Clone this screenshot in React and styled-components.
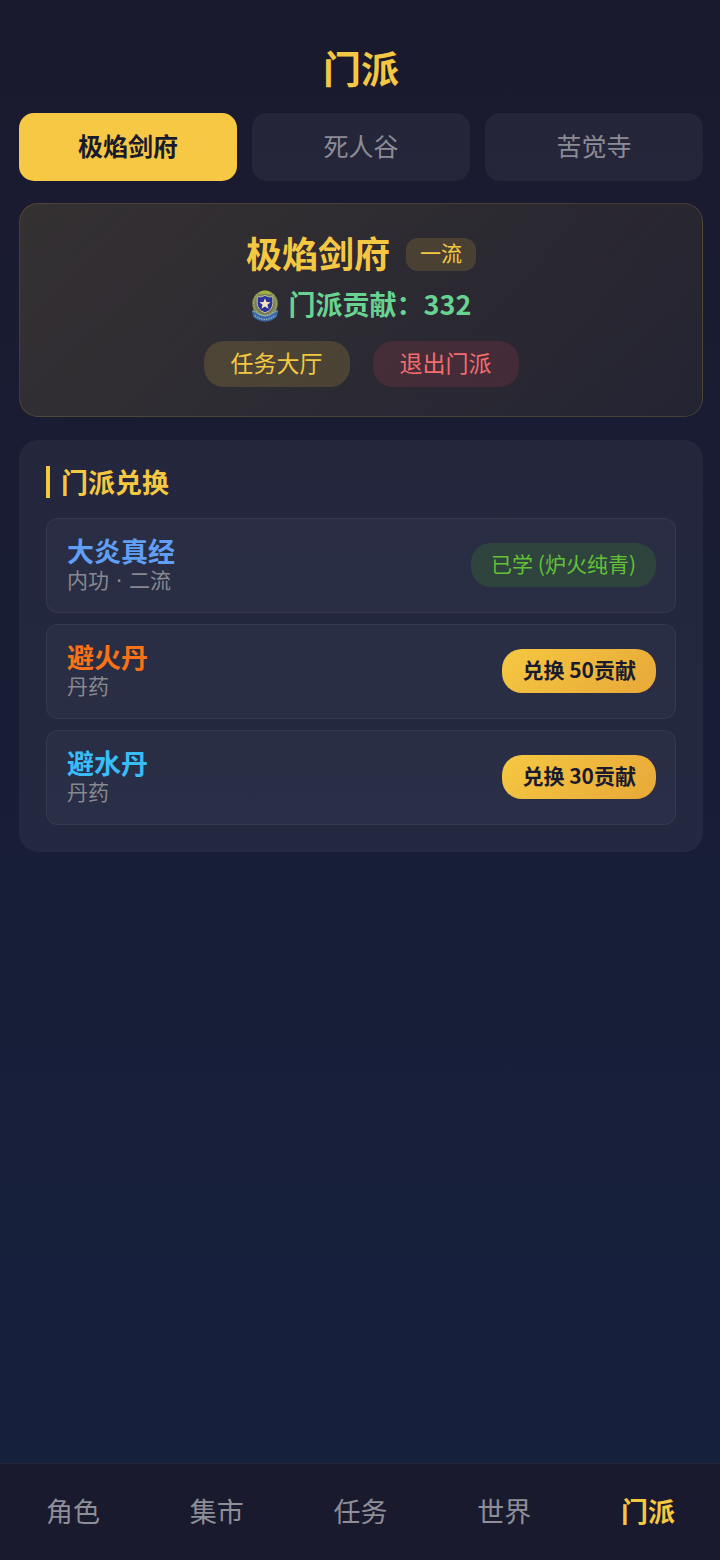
import React, { useState } from "react";
import styled, { createGlobalStyle, css } from "styled-components";

const GlobalStyle = createGlobalStyle`
  *, *::before, *::after { box-sizing: border-box; }
  body {
    margin: 0;
    background: #1a1a2e;
    color: #ffffff;
    font-family: "Noto Sans CJK SC", "Noto Sans", sans-serif;
  }
  button { font-family: inherit; border: 0; margin: 0; cursor: pointer; }
  h1, h2, h3, p, ul { margin: 0; padding: 0; }
`;

const Page = styled.div`
  display: flex;
  flex-direction: column;
  min-height: 100vh;
  background: linear-gradient(180deg, #1a1a2e 0%, #16213e 100%);
`;

const Main = styled.main`
  flex: 1;
  display: flex;
  flex-direction: column;
  padding: 39px 17px 24px 19px;
`;

const PageTitle = styled.h1`
  margin-bottom: 18px;
  text-align: center;
  font-size: 38px;
  line-height: 56px;
  font-weight: 700;
  color: #f5c842;
`;

const SectTabs = styled.div`
  display: flex;
  gap: 15px;
  margin-bottom: 22px;
`;

const SectTab = styled.button`
  flex: 1;
  height: 68px;
  padding: 0 0 4px;
  border-radius: 15px;
  font-size: 25px;
  line-height: 36px;
  background: rgba(255, 255, 255, 0.05);
  color: #8c8c96;
  ${({ $active }) =>
    $active &&
    css`
      background: #f7c843;
      color: #1a1a2e;
      font-weight: 700;
    `}
`;

const SectCard = styled.section`
  display: flex;
  flex-direction: column;
  align-items: center;
  margin-bottom: 23px;
  padding: 24px 24px 29px;
  border: 1px solid rgba(245, 200, 66, 0.15);
  border-radius: 19px;
  background: linear-gradient(135deg, rgba(245, 200, 66, 0.13), rgba(245, 200, 66, 0.05));
`;

const NameRow = styled.div`
  display: flex;
  align-items: center;
  gap: 16px;
`;

const SectName = styled.h2`
  padding-bottom: 4px;
  font-size: 36px;
  line-height: 48px;
  font-weight: 700;
  color: #f5c842;
`;

const RankBadge = styled.span`
  padding: 0 14px 4px;
  border-radius: 12px;
  background: rgba(245, 200, 66, 0.15);
  color: #f5c842;
  font-size: 21px;
  line-height: 29px;
`;

const Contribution = styled.p`
  display: flex;
  align-items: center;
  gap: 10px;
  margin: 4px 0 13px;
  color: #68d391;
  font-size: 27px;
  line-height: 40px;
  font-weight: 700;
`;

const ContributionText = styled.span`
  padding-bottom: 4px;
`;

const Actions = styled.div`
  display: flex;
  gap: 23px;
`;

const ActionButton = styled.button`
  height: 46px;
  padding: 0 27px 4px;
  border-radius: 20px;
  font-size: 23px;
  line-height: 34px;
  color: ${({ $danger }) => ($danger ? "#f56c6f" : "#f5c842")};
  background: ${({ $danger }) =>
    $danger ? "rgba(245, 80, 90, 0.13)" : "rgba(245, 200, 66, 0.16)"};
`;

const Panel = styled.section`
  padding: 26px 27px 27px;
  border-radius: 19px;
  background: rgba(255, 255, 255, 0.05);
`;

const PanelTitle = styled.h2`
  margin-bottom: 20px;
  padding-left: 11px;
  border-left: 4px solid #f5c842;
  color: #f5c842;
  font-size: 27px;
  line-height: 32px;
  font-weight: 700;
`;

const ItemList = styled.ul`
  display: flex;
  flex-direction: column;
  gap: 11px;
  list-style: none;
`;

const Item = styled.li`
  display: flex;
  align-items: center;
  justify-content: space-between;
  min-height: 95px;
  padding: 15px 19px 17px 20px;
  border: 1px solid rgba(255, 255, 255, 0.05);
  border-radius: 12px;
  background: rgba(255, 255, 255, 0.03);
`;

const ItemName = styled.h3`
  color: ${({ $color }) => $color};
  font-size: 27px;
  line-height: 32px;
  font-weight: 700;
`;

const ItemKind = styled.p`
  color: #888890;
  font-family: "DejaVu Sans", "Noto Sans CJK SC", sans-serif;
  font-size: 21px;
  line-height: 28px;
`;

const LearnedTag = styled.span`
  padding: 5px 20px 8px;
  border-radius: 20px;
  background: rgba(82, 196, 26, 0.15);
  color: #62c136;
  font-size: 21px;
  line-height: 31px;
`;

const ExchangeButton = styled.button`
  height: 44px;
  padding: 0 20px 2px;
  border-radius: 20px;
  background: linear-gradient(135deg, #f5c842, #e8a838);
  color: #1a1a2e;
  font-size: 21px;
  line-height: 31px;
  font-weight: 700;
`;

const BottomNav = styled.nav`
  position: sticky;
  bottom: 0;
  display: flex;
  height: 97px;
  padding: 0 0 3px 1px;
  border-top: 1px solid rgba(255, 255, 255, 0.05);
  background: #1a1a2e;
`;

const NavLink = styled.a`
  flex: 1;
  display: flex;
  align-items: center;
  justify-content: center;
  font-size: 27px;
  line-height: 40px;
  text-decoration: none;
  color: ${({ $active }) => ($active ? "#f5c842" : "#8e8e98")};
  font-weight: ${({ $active }) => ($active ? 700 : 400)};
`;

function ContributionMedal() {
  return (
    <svg width="28" height="32" viewBox="0 0 28 32" aria-hidden="true">
      <path d="M.8 20.5L4.6 20.6Q14 29 23.4 20.6L27.2 20.5L25.6 27Q14 36 2.4 27Z" fill="#3f72a8" />
      <ellipse cx="14" cy="13.6" rx="12.8" ry="13.2" fill="#7c8751" />
      <ellipse cx="14" cy="13.6" rx="11.4" ry="12" fill="none" stroke="#a3a95a" strokeWidth="1.2" strokeDasharray="2 1" />
      <ellipse cx="14" cy="13.8" rx="9.6" ry="10.4" fill="#77796a" />
      <path d="M8 2.6Q14 -1.6 20 2.6L18 4.8Q14 2.8 10 4.8Z" fill="#a4b23a" />
      <path d="M6.2 6.8Q10.5 7.6 14 5.4Q17.5 7.6 21.8 6.8V13.4Q21.4 20 14 22.8Q6.6 20 6.2 13.4Z" fill="#2c3297" stroke="#c1bd91" strokeWidth="1" />
      <path d="M14 8.2L15.5 12L19.6 12.2L16.4 14.8L17.5 18.8L14 16.5L10.5 18.8L11.6 14.8L8.4 12.2L12.5 12Z" fill="#f4e6bd" />
      <path d="M1.4 20.6L4.4 21.6Q14 30 23.6 21.6L26.6 20.6L25.2 26.6Q14 35.4 2.8 26.6Z" fill="#3a69a6" />
      <path d="M1.6 21L4.4 22Q14 29.8 23.6 22L26.4 21" fill="none" stroke="#a8bbc0" strokeWidth=".8" />
      <path d="M3.8 25.6Q14 33.2 24.2 25.6" fill="none" stroke="#91b5cd" strokeWidth="1.3" strokeDasharray="1.4 1" />
    </svg>
  );
}

const sects = ["极焰剑府", "死人谷", "苦觉寺"];

const goods = [
  { name: "大炎真经", kind: "内功 · 二流", color: "#609ff5", learned: "炉火纯青" },
  { name: "避火丹", kind: "丹药", color: "#f97316", cost: 50 },
  { name: "避水丹", kind: "丹药", color: "#38bdf8", cost: 30 },
];

const navItems = [
  { label: "角色", href: "#role" },
  { label: "集市", href: "#market" },
  { label: "任务", href: "#quest" },
  { label: "世界", href: "#world" },
  { label: "门派", href: "#sect", active: true },
];

export default function App() {
  const [selected, setSelected] = useState(sects[0]);

  return (
    <Page>
      <GlobalStyle />
      <Main>
        <PageTitle>门派</PageTitle>
        <SectTabs>
          {sects.map((sect) => (
            <SectTab
              key={sect}
              type="button"
              aria-pressed={sect === selected}
              $active={sect === selected}
              onClick={() => setSelected(sect)}
            >
              {sect}
            </SectTab>
          ))}
        </SectTabs>

        <SectCard>
          <NameRow>
            <SectName>{selected}</SectName>
            <RankBadge>一流</RankBadge>
          </NameRow>
          <Contribution>
            <ContributionMedal />
            <ContributionText>门派贡献：332</ContributionText>
          </Contribution>
          <Actions>
            <ActionButton type="button">任务大厅</ActionButton>
            <ActionButton type="button" $danger>退出门派</ActionButton>
          </Actions>
        </SectCard>

        <Panel>
          <PanelTitle>门派兑换</PanelTitle>
          <ItemList>
            {goods.map((item) => (
              <Item key={item.name}>
                <div>
                  <ItemName $color={item.color}>{item.name}</ItemName>
                  <ItemKind>{item.kind}</ItemKind>
                </div>
                {item.learned ? (
                  <LearnedTag>{`已学 (${item.learned})`}</LearnedTag>
                ) : (
                  <ExchangeButton type="button">{`兑换 ${item.cost}贡献`}</ExchangeButton>
                )}
              </Item>
            ))}
          </ItemList>
        </Panel>
      </Main>

      <BottomNav>
        {navItems.map((item) => (
          <NavLink
            key={item.label}
            href={item.href}
            $active={item.active}
            aria-current={item.active ? "page" : undefined}
          >
            {item.label}
          </NavLink>
        ))}
      </BottomNav>
    </Page>
  );
}
